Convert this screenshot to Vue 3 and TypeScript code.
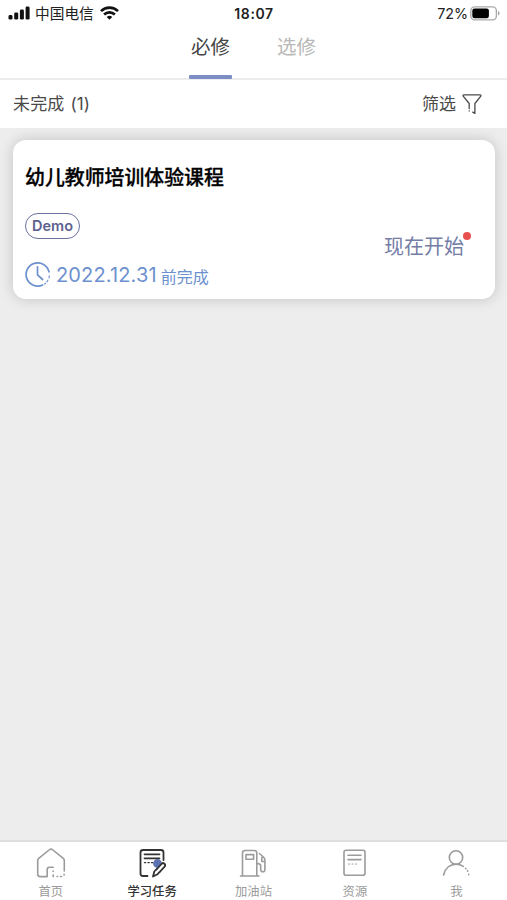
<script setup lang="ts">
import { ref } from 'vue'

type Icon = 'home' | 'task' | 'fuel' | 'doc' | 'me'

const tabs: string[] = ['必修', '选修']
const activeTab = ref(0)
const activeNav = ref<Icon>('task')
const navItems: { icon: Icon; label: string }[] = [
  { icon: 'home', label: '首页' },
  { icon: 'task', label: '学习任务' },
  { icon: 'fuel', label: '加油站' },
  { icon: 'doc', label: '资源' },
  { icon: 'me', label: '我' },
]
</script>

<template>
  <div class="screen">
    <div class="status">
      <div class="carrier">
        <svg class="signal" width="23" height="14" viewBox="0 0 23 14">
          <rect x="0.5" y="9" width="4" height="4.6" rx="1.4" />
          <rect x="6.2" y="6.4" width="4" height="7.2" rx="1.4" />
          <rect x="11.9" y="3.6" width="4" height="10" rx="1.4" />
          <rect x="17.6" y="0.6" width="4" height="13" rx="1.4" />
        </svg>
        <span class="operator">中国电信</span>
        <svg class="wifi" width="19" height="14" viewBox="0 0 19 14" fill="none" stroke="#111" stroke-width="2.6">
          <path d="M1 5.1a12.2 12.2 0 0 1 17 0" />
          <path d="M4.1 8.5a7.8 7.8 0 0 1 10.800 0" />
          <path d="M9.500 13.700 6.700 11a4.300 4.300 0 0 1 5.600 0z" fill="#111" stroke="none" />
        </svg>
      </div>
      <span class="time">18:07</span>
      <div class="power">
        <span>72%</span>
        <svg width="30" height="15" viewBox="0 0 30 15">
          <rect x="0.8" y="0.9" width="25.6" height="13" rx="4" fill="#fff" stroke="#aaa" stroke-width="1.4" />
          <rect x="2.3" y="2.5" width="16.6" height="9.8" rx="2.2" fill="#000" />
          <path d="M28 5v4.6q1.6-.6 1.6-2.3T28 5z" fill="#aaa" />
        </svg>
      </div>
    </div>

    <div class="tabs">
      <button
        v-for="(tab, i) in tabs"
        :key="tab"
        class="tab"
        :class="{ active: i === activeTab }"
        @click="activeTab = i"
      >{{ tab }}</button>
    </div>

    <div class="toolbar">
      <span class="count">未完成 (1)</span>
      <button class="filter">
        <span>筛选</span>
        <svg width="20" height="21" viewBox="0 0 20 21" fill="none" stroke="#4a4a4a" stroke-width="1.3" stroke-linejoin="round" stroke-linecap="round">
          <path d="M7.200 14.600V9.500L1.200 2.200Q.7.800 2 .8h16q1.300 0 .8 1.400L12.900 9.500v9.900l-2.200-1.300" />
          <path d="M7.200 16.800v.2" />
        </svg>
      </button>
    </div>

    <main class="content">
      <article class="card">
        <div class="info">
          <h2 class="title">幼儿教师培训体验课程</h2>
          <span class="tag">Demo</span>
          <div class="due">
            <svg width="26" height="26" viewBox="0 0 26 26" fill="none" stroke="#6d91cf" stroke-width="1.700" stroke-linecap="round">
              <path d="M17.600 23A11.600 11.600 0 1 1 24 9.800" />
              <path d="M12.500 4.800v8l5.100 4.700" />
              <path d="M24.300 13.800l-.3 2.100M22.900 18.200l-1 1.700M20.600 21.200l-1 .8" stroke-width="1.100" />
            </svg>
            <span class="date">2022.12.31</span>
            <span class="suffix">前完成</span>
          </div>
        </div>
        <button class="start">现在开始<i class="dot"></i></button>
      </article>
    </main>

    <nav class="nav">
      <button
        v-for="item in navItems"
        :key="item.icon"
        class="nav-item"
        :class="{ active: item.icon === activeNav }"
        @click="activeNav = item.icon"
      >
        <svg class="nav-icon" width="32" height="32" viewBox="0 0 32 32">
          <g v-if="item.icon === 'home'">
            <path d="M29.300 24V13.500q0-1.200-1-2.100L17.300 2.500q-1.300-1-2.600 0L3.700 11.400q-1 .9-1 2.100V27q0 2.600 2.600 2.600h6.900v-7q0-2.300 2.300-2.300h3.700" />
            <path d="M18.200 24v.4M18.200 28v1.500M22 29.500h.6M25.600 29.500h1M29.100 27.400v.6" />
          </g>
          <g v-else-if="item.icon === 'task'">
            <path d="M11.500 29H7q-2.500 0-2.500-2.500v-21Q4.500 3 7 3h18Q27.500 3 27.500 5.500V13" stroke-width="1.800" />
            <path d="M8.500 7.300h15M8.500 11.300h15" stroke-width="1.800" />
            <path d="M8.500 15.600h1.200M12 15.600h1.200M15.500 15.600h1.200" stroke-width="1.400" />
            <path d="M17 29.500l1.300-5 7.200-7.500q1.300-1.400 2.800-.2t.3 2.700l-7 7.700z" fill="#fff" stroke-width="1.800" />
            <circle cx="21.500" cy="16.500" r="4.400" fill="#5c72b1" stroke="none" />
            <path d="M20.500 22.500l5-5.500q1.300-1.400 2.800-.2t.3 2.700l-5 5.500" fill="#fff" stroke-width="1.800" />
          </g>
          <g v-else-if="item.icon === 'fuel'">
            <path d="M5.500 29V6Q5.500 3.500 8 3.500h9.300q2.500 0 2.500 2.500v23M3.500 29h18.500" />
            <rect x="9" y="7.600" width="7.600" height="4.700" />
            <path d="M22.400 6.500l4 3.500q1.500 1.300 1.500 3v9.500q0 2.300-2.100 2.300t-2.100-2.300V19q0-2.500-3.700-2.500M27.500 14.500h-2.700v-4" />
          </g>
          <g v-else-if="item.icon === 'doc'">
            <rect x="5" y="3.200" width="21" height="25" rx="2" />
            <path d="M9 8.200h13M9 12.600h13" />
            <path d="M9.500 17h1M13 17h1M16.500 17h1" stroke-width="1.200" />
          </g>
          <g v-else>
            <circle cx="16" cy="10.500" r="6.700" />
            <path d="M3.600 28C5.200 21 10.200 17.200 16.300 17.200q4 0 7 2.200" />
            <path d="M25.600 21.300l.3.300M27.500 23.800l.2.400M28.700 27.400v.4" />
          </g>
        </svg>
        <span>{{ item.label }}</span>
      </button>
    </nav>
  </div>
</template>

<style>
body {
  margin: 0;
}
</style>

<style scoped>
.screen {
  width: 507px;
  height: 900px;
  display: flex;
  flex-direction: column;
  overflow: hidden;
  background: #fff;
  color: #4a4a4a;
  font-family: Inter, "Noto Sans CJK SC", sans-serif;
}
svg {
  display: block;
  flex: none;
}
button {
  border: 0;
  padding: 0;
  background: none;
  color: inherit;
  font: inherit;
}
.status {
  display: grid;
  grid-template-columns: 1fr auto 1fr;
  align-items: center;
  box-sizing: border-box;
  height: 27px;
  padding: 0 7px 0 8px;
  color: #222;
  font-size: 14.300px;
  line-height: 20px;
}
.carrier {
  display: flex;
  align-items: center;
}
.carrier svg {
  margin-bottom: 1px;
}
.signal {
  fill: #111;
}
.operator {
  margin-left: 4px;
  font-size: 14.700px;
}
.wifi {
  margin-left: 6px;
}
.time {
  font-size: 14px;
  font-weight: 600;
  letter-spacing: 0.600px;
}
.power {
  display: flex;
  justify-content: flex-end;
  align-items: center;
  gap: 2px;
}
.tabs {
  display: flex;
  justify-content: center;
  gap: 43px;
  height: 51px;
  border-bottom: 2px solid #ececec;
}
.tab {
  display: flex;
  flex-direction: column;
  align-items: center;
  width: 43px;
  height: 52px;
  font-size: 19.500px;
  line-height: 41px;
  white-space: nowrap;
  color: #b8b8b8;
}
.tab.active {
  color: #444;
}
.tab.active::after {
  content: "";
  width: 43px;
  height: 4px;
  margin-top: 7px;
  border-radius: 1px;
  background: #7b8ec5;
}
.toolbar {
  display: flex;
  justify-content: space-between;
  align-items: center;
  height: 48px;
  padding: 0 25px 0 13px;
  font-size: 17px;
  line-height: 24px;
}
.count {
  word-spacing: 1px;
  letter-spacing: 0.150px;
}
.filter {
  display: flex;
  align-items: center;
  gap: 6px;
}
.content {
  flex: 1;
  padding: 12px 12px 0 13px;
  background: #ededed;
}
.card {
  display: flex;
  justify-content: space-between;
  box-sizing: border-box;
  height: 159px;
  padding: 23px 31px 10px 12px;
  border-radius: 13px;
  background: #fff;
  box-shadow: 0 0 14px rgba(0, 0, 0, 0.180);
}
.info {
  display: flex;
  flex-direction: column;
  align-items: flex-start;
}
.title {
  margin: 0;
  font-size: 19.900px;
  font-weight: 500;
  -webkit-text-stroke: 0.300px #000;
  line-height: 30px;
  color: #000;
}
.tag {
  box-sizing: border-box;
  width: 55px;
  height: 26px;
  margin-top: 20px;
  border: 1.500px solid #6a719d;
  border-radius: 13px;
  text-align: center;
  font-size: 14.500px;
  font-weight: 600;
  line-height: 23px;
  color: #5c628f;
}
.due {
  display: flex;
  align-items: center;
  height: 26px;
  margin-top: 23px;
  color: #6d91cf;
}
.date {
  margin-left: 5px;
  font-size: 20px;
  letter-spacing: 0.150px;
}
.suffix {
  margin: 2px 0 0 4px;
  font-size: 16px;
}
.start {
  position: relative;
  align-self: flex-start;
  margin-top: 68px;
  font-size: 20px;
  line-height: 32px;
  color: #747da6;
}
.dot {
  position: absolute;
  top: 1px;
  right: -7px;
  width: 8px;
  height: 8px;
  border-radius: 50%;
  background: #e9514f;
}
.nav {
  display: grid;
  grid-template-columns: repeat(5, 1fr);
  height: 58px;
  border-top: 2px solid #dedede;
}
.nav-item {
  display: flex;
  flex-direction: column;
  align-items: center;
  padding-top: 5px;
  font-size: 12.300px;
  line-height: 18px;
  color: #9b9b9b;
}
.nav-item span {
  margin-top: 4px;
}
.nav-item.active {
  color: #333;
  font-weight: 500;
}
.nav-icon {
  fill: none;
  stroke: currentColor;
  stroke-width: 1.600;
  stroke-linecap: round;
  stroke-linejoin: round;
}
</style>
